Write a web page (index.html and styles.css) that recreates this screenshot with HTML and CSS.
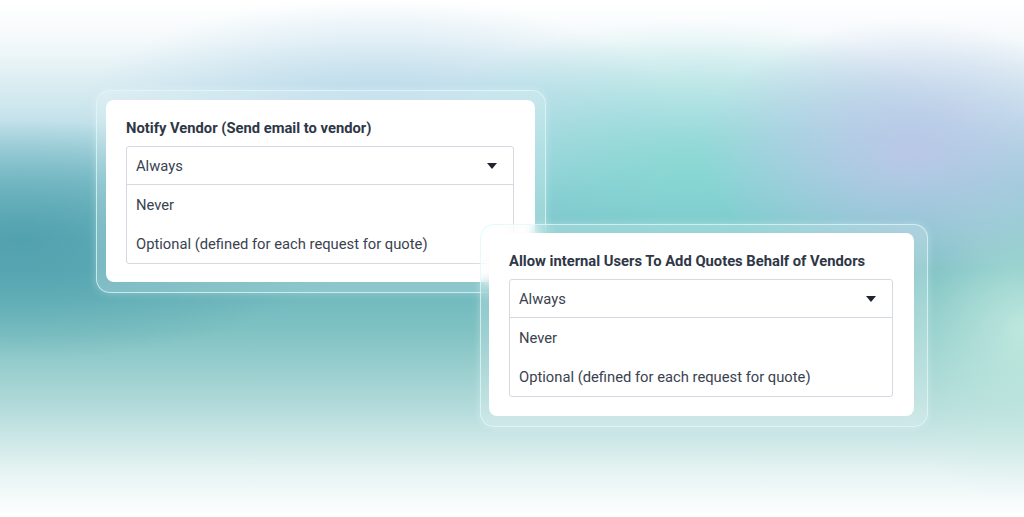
FILE: index.html
```html
<!DOCTYPE html>
<html>
<head>
<meta charset="utf-8">
<link rel="stylesheet" href="styles.css">
</head>
<body>
<div class="stage">
  <div class="frame frame-one">
    <div class="card">
      <div class="label">Notify Vendor (Send email to vendor)</div>
      <div class="select">
        <div class="option selected">
          <span>Always</span>
          <svg class="caret" width="10" height="6" viewBox="0 0 10 6"><path d="M0 0 H10 L5 6 Z" fill="#1f2430"/></svg>
        </div>
        <div class="option">Never</div>
        <div class="option">Optional (defined for each request for quote)</div>
      </div>
    </div>
  </div>
  <div class="frame frame-two">
    <div class="card">
      <div class="label">Allow internal Users To Add Quotes Behalf of Vendors</div>
      <div class="select">
        <div class="option selected">
          <span>Always</span>
          <svg class="caret" width="10" height="6" viewBox="0 0 10 6"><path d="M0 0 H10 L5 6 Z" fill="#1f2430"/></svg>
        </div>
        <div class="option">Never</div>
        <div class="option">Optional (defined for each request for quote)</div>
      </div>
    </div>
  </div>
</div>
</body>
</html>
```

FILE: styles.css
```css
html, body {
  margin: 0;
  padding: 0;
}
body {
  font-family: Roboto, "Liberation Sans", sans-serif;
}
.stage {
  position: relative;
  width: 1024px;
  height: 517px;
  overflow: hidden;
  background:
    radial-gradient(ellipse 210px 130px at 910px 150px, rgba(186, 198, 232, 0.95), rgba(186, 198, 232, 0) 100%),
    radial-gradient(ellipse 300px 150px at 690px 170px, rgba(130, 218, 210, 0.75), rgba(130, 218, 210, 0) 100%),
    radial-gradient(ellipse 320px 120px at 20px 240px, rgba(78, 158, 172, 0.9), rgba(78, 158, 172, 0) 100%),
    radial-gradient(ellipse 300px 110px at 380px 110px, rgba(170, 208, 230, 0.7), rgba(170, 208, 230, 0) 100%),
    radial-gradient(ellipse 160px 170px at 1024px 330px, rgba(200, 238, 226, 0.85), rgba(200, 238, 226, 0) 100%),
    linear-gradient(180deg, #ffffff 0%, #f4f9fb 8%, #c9e4ec 22%, #8fcad4 36%, #65b3ba 52%, #80c2c3 64%, #b0d9d9 78%, #e6f3f3 91%, #ffffff 100%);
}
.frame {
  position: absolute;
  box-sizing: border-box;
  border-radius: 14px;
  border: 1px solid rgba(220, 250, 250, 0.75);
  background: rgba(255, 255, 255, 0.22);
  backdrop-filter: blur(6px);
  box-shadow: 0 0 8px rgba(255, 255, 255, 0.3);
}
.frame-one {
  left: 96px;
  top: 90px;
  width: 450px;
  height: 203px;
  padding: 9px 10px 10px 9px;
}
.frame-two {
  left: 480px;
  top: 224px;
  width: 448px;
  height: 203px;
  padding: 8px 13px 10px 8px;
}
.card {
  box-sizing: border-box;
  height: 100%;
  background: #ffffff;
  border-radius: 8px;
  padding: 18px 21px 0 20px;
  display: flex;
  flex-direction: column;
}
.label {
  font-size: 14.75px;
  font-weight: 700;
  color: #2e3746;
  line-height: 20px;
  margin-bottom: 8px;
}
.select {
  border: 1px solid #d5dae2;
  border-radius: 3px;
  color: #3a4250;
  font-size: 14.75px;
}
.option {
  height: 39px;
  display: flex;
  align-items: center;
  padding: 0 16px 0 9px;
  box-sizing: border-box;
}
.option.selected {
  height: 38px;
  justify-content: space-between;
  border-bottom: 1px solid #d5dae2;
}
.caret {
  display: block;
}
```
